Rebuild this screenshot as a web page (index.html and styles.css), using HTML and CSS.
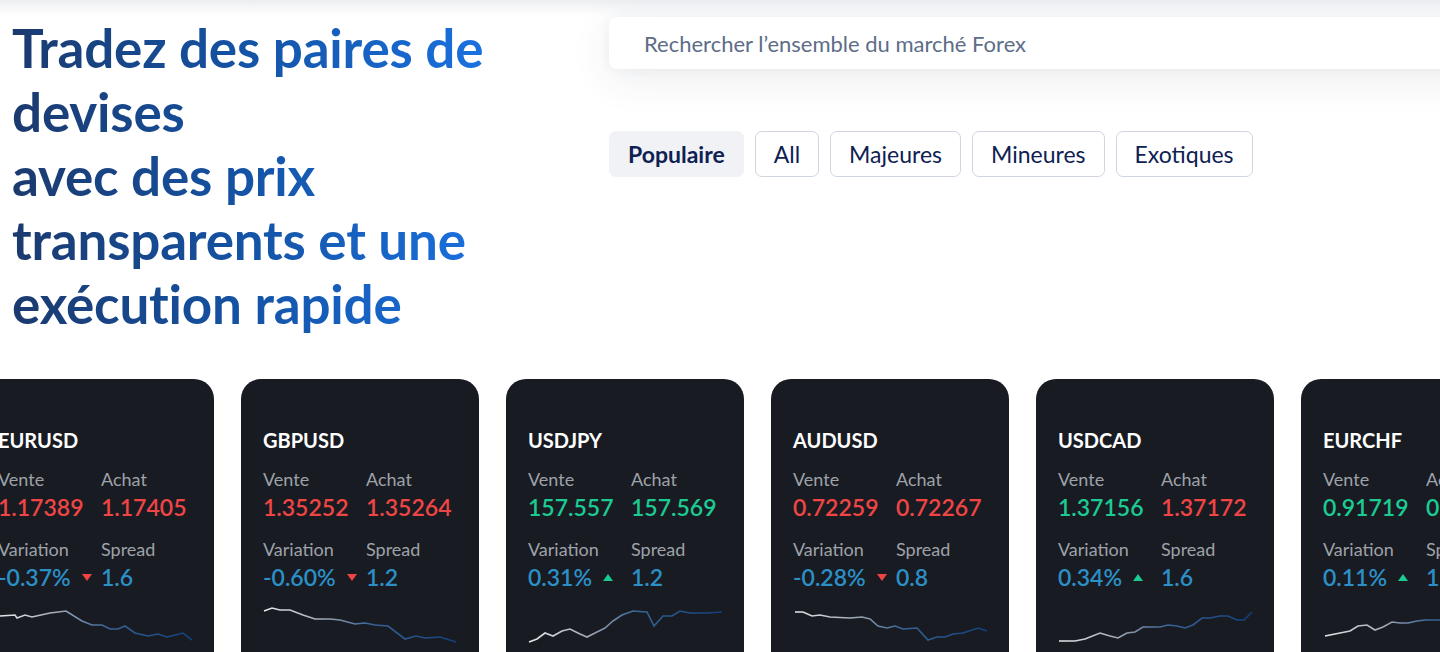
FILE: index.html
```html
<!DOCTYPE html>
<html lang="fr">
<head>
<meta charset="utf-8">
<title>Forex</title>
<link rel="stylesheet" href="styles.css">
</head>
<body>
<div class="page">
  <section class="hero">
    <h1 class="title">Tradez des paires de devises<br>avec des prix transparents et une exécution rapide</h1>
    <div class="side">
      <div class="search">Rechercher l’ensemble du marché Forex</div>
      <div class="tabs">
        <span class="tab active">Populaire</span>
        <span class="tab">All</span>
        <span class="tab">Majeures</span>
        <span class="tab">Mineures</span>
        <span class="tab">Exotiques</span>
      </div>
    </div>
  </section>

  <section class="cards">
    <article class="card">
      <div class="pair">EURUSD</div>
      <div class="stats">
        <span class="lbl">Vente</span><span class="lbl">Achat</span>
        <span class="val red">1.17389</span><span class="val red">1.17405</span>
        <span class="lbl gap">Variation</span><span class="lbl gap">Spread</span>
        <span class="val blue">-0.37%<svg class="tri" viewBox="0 0 10 7"><path d="M0 0H10L5 7Z" fill="#ef4444"/></svg></span><span class="val blue">1.6</span>
      </div>
      <svg class="spark" viewBox="0 0 196 46"><defs><linearGradient id="g1" x1="0" x2="1" y1="0" y2="0"><stop offset="0" stop-color="#e6e8ec"/><stop offset="0.3" stop-color="#a2a9b4"/><stop offset="0.55" stop-color="#3a6598"/><stop offset="1" stop-color="#123f7c"/></linearGradient></defs><polyline fill="none" stroke="url(#g1)" stroke-width="1.6" points="2,17 17,16 19,19 27,16 34,18 52,14 68,12 84,22 94,26 104,26 112,30 120,30 127,27 137,34 150,37 160,35 169,38 185,34 194,41"/></svg>
    </article>

    <article class="card">
      <div class="pair">GBPUSD</div>
      <div class="stats">
        <span class="lbl">Vente</span><span class="lbl">Achat</span>
        <span class="val red">1.35252</span><span class="val red">1.35264</span>
        <span class="lbl gap">Variation</span><span class="lbl gap">Spread</span>
        <span class="val blue">-0.60%<svg class="tri" viewBox="0 0 10 7"><path d="M0 0H10L5 7Z" fill="#ef4444"/></svg></span><span class="val blue">1.2</span>
      </div>
      <svg class="spark" viewBox="0 0 196 46"><defs><linearGradient id="g2" x1="0" x2="1" y1="0" y2="0"><stop offset="0" stop-color="#e6e8ec"/><stop offset="0.3" stop-color="#a2a9b4"/><stop offset="0.55" stop-color="#3a6598"/><stop offset="1" stop-color="#123f7c"/></linearGradient></defs><polyline fill="none" stroke="url(#g2)" stroke-width="1.6" points="1,12 9,9 17,11 27,11 40,16 52,20 67,20 77,21 92,25 102,24 112,26 125,27 142,40 153,37 162,39 177,38 193,43"/></svg>
    </article>

    <article class="card">
      <div class="pair">USDJPY</div>
      <div class="stats">
        <span class="lbl">Vente</span><span class="lbl">Achat</span>
        <span class="val green">157.557</span><span class="val green">157.569</span>
        <span class="lbl gap">Variation</span><span class="lbl gap">Spread</span>
        <span class="val blue">0.31%<svg class="tri" viewBox="0 0 10 7"><path d="M0 7H10L5 0Z" fill="#1ccb93"/></svg></span><span class="val blue">1.2</span>
      </div>
      <svg class="spark" viewBox="0 0 196 46"><defs><linearGradient id="g3" x1="0" x2="1" y1="0" y2="0"><stop offset="0" stop-color="#e6e8ec"/><stop offset="0.3" stop-color="#a2a9b4"/><stop offset="0.55" stop-color="#3a6598"/><stop offset="1" stop-color="#123f7c"/></linearGradient></defs><polyline fill="none" stroke="url(#g3)" stroke-width="1.6" points="1,43 9,40 17,34 25,37 34,32 42,30 52,35 59,38 69,33 77,29 85,22 94,16 105,12 119,13 126,27 135,17 144,17 152,12 162,14 179,14 194,13"/></svg>
    </article>

    <article class="card">
      <div class="pair">AUDUSD</div>
      <div class="stats">
        <span class="lbl">Vente</span><span class="lbl">Achat</span>
        <span class="val red">0.72259</span><span class="val red">0.72267</span>
        <span class="lbl gap">Variation</span><span class="lbl gap">Spread</span>
        <span class="val blue">-0.28%<svg class="tri" viewBox="0 0 10 7"><path d="M0 0H10L5 7Z" fill="#ef4444"/></svg></span><span class="val blue">0.8</span>
      </div>
      <svg class="spark" viewBox="0 0 196 46"><defs><linearGradient id="g4" x1="0" x2="1" y1="0" y2="0"><stop offset="0" stop-color="#e6e8ec"/><stop offset="0.3" stop-color="#a2a9b4"/><stop offset="0.55" stop-color="#3a6598"/><stop offset="1" stop-color="#123f7c"/></linearGradient></defs><polyline fill="none" stroke="url(#g4)" stroke-width="1.6" points="2,13 10,13 19,17 27,16 37,18 57,19 69,18 77,20 85,27 94,29 102,27 110,30 124,29 135,41 144,38 152,38 160,35 170,34 185,29 194,32"/></svg>
    </article>

    <article class="card">
      <div class="pair">USDCAD</div>
      <div class="stats">
        <span class="lbl">Vente</span><span class="lbl">Achat</span>
        <span class="val green">1.37156</span><span class="val red">1.37172</span>
        <span class="lbl gap">Variation</span><span class="lbl gap">Spread</span>
        <span class="val blue">0.34%<svg class="tri" viewBox="0 0 10 7"><path d="M0 7H10L5 0Z" fill="#1ccb93"/></svg></span><span class="val blue">1.6</span>
      </div>
      <svg class="spark" viewBox="0 0 196 46"><defs><linearGradient id="g5" x1="0" x2="1" y1="0" y2="0"><stop offset="0" stop-color="#e6e8ec"/><stop offset="0.3" stop-color="#a2a9b4"/><stop offset="0.55" stop-color="#3a6598"/><stop offset="1" stop-color="#123f7c"/></linearGradient></defs><polyline fill="none" stroke="url(#g5)" stroke-width="1.6" points="1,42 17,42 27,40 42,34 52,37 60,39 69,34 77,33 85,28 102,28 110,26 119,27 127,29 135,26 144,19 152,19 162,17 170,17 179,21 186,21 194,13"/></svg>
    </article>

    <article class="card">
      <div class="pair">EURCHF</div>
      <div class="stats">
        <span class="lbl">Vente</span><span class="lbl">Achat</span>
        <span class="val green">0.91719</span><span class="val green">0.91735</span>
        <span class="lbl gap">Variation</span><span class="lbl gap">Spread</span>
        <span class="val blue">0.11%<svg class="tri" viewBox="0 0 10 7"><path d="M0 7H10L5 0Z" fill="#1ccb93"/></svg></span><span class="val blue">1.6</span>
      </div>
      <svg class="spark" viewBox="0 0 196 46"><defs><linearGradient id="g6" x1="0" x2="1" y1="0" y2="0"><stop offset="0" stop-color="#e6e8ec"/><stop offset="0.3" stop-color="#a2a9b4"/><stop offset="0.55" stop-color="#3a6598"/><stop offset="1" stop-color="#123f7c"/></linearGradient></defs><polyline fill="none" stroke="url(#g6)" stroke-width="1.6" points="2,37 17,34 27,32 35,27 44,26 52,31 60,28 69,23 77,24 85,24 94,22 102,21 117,21 130,20 145,22 160,18 175,19 194,15"/></svg>
    </article>
  </section>
</div>
</body>
</html>
```

FILE: styles.css
```css
* { box-sizing: border-box; }
html, body { margin: 0; padding: 0; }
body {
  width: 1440px;
  height: 652px;
  overflow: hidden;
  background: linear-gradient(#eceef1 0, #f6f7f9 8px, #ffffff 16px) no-repeat, #ffffff;
  font-family: Lato, "Noto Sans", sans-serif;
}
.page { width: 1440px; }
.hero {
  display: grid;
  grid-template-columns: 597px 1fr;
  padding-left: 12px;
}
.title {
  margin: 16px 0 0;
  width: 500px;
  font-size: 53px;
  line-height: 64px;
  font-weight: 700;
  letter-spacing: -0.2px;
  background: linear-gradient(90deg, #1b3a6e 0%, #1452a3 45%, #1a74e6 100%);
  -webkit-background-clip: text;
  background-clip: text;
  color: transparent;
}
.side { padding-top: 17px; }
.search {
  width: 900px;
  height: 52px;
  background: #fff;
  border-radius: 8px;
  box-shadow: 0 10px 40px rgba(40, 50, 80, 0.09), 0 0 12px rgba(40, 50, 80, 0.05);
  padding-left: 35px;
  display: flex;
  align-items: center;
  font-size: 22px;
  color: #5d6d87;
}
.tabs {
  display: flex;
  gap: 11px;
  margin-top: 62px;
}
.tab {
  height: 46px;
  display: flex;
  align-items: center;
  padding: 0 18px;
  border: 1px solid #cfd6e0;
  border-radius: 7px;
  font-size: 23px;
  color: #0e2152;
  background: #fff;
}
.tab.active {
  border-color: #f0f2f5;
  background: #f0f2f5;
  font-weight: 700;
}
.cards {
  display: flex;
  gap: 27px;
  margin-top: 43px;
  margin-left: -24px;
}
.card {
  flex: 0 0 238px;
  height: 300px;
  background: #181b22;
  border-radius: 20px;
  padding: 49px 0 0 22px;
}
.pair {
  font-size: 20px;
  line-height: 24px;
  font-weight: 700;
  color: #ffffff;
}
.stats {
  display: grid;
  grid-template-columns: 103px 103px;
  margin-top: 16px;
}
.lbl {
  font-size: 18px;
  line-height: 22px;
  color: #9ea2a9;
}
.lbl.gap { margin-top: 17px; }
.val {
  font-size: 23px;
  line-height: 28px;
  font-weight: 600;
  margin-top: 3px;
  white-space: nowrap;
  display: flex;
  align-items: center;
}
.red { color: #f04545; }
.green { color: #1ccb93; }
.blue { color: #2c8fc6; }
.tri {
  width: 10px;
  height: 7px;
  margin-left: 11px;
}
.spark {
  display: block;
  width: 196px;
  height: 46px;
  margin-top: 8px;
}
```
